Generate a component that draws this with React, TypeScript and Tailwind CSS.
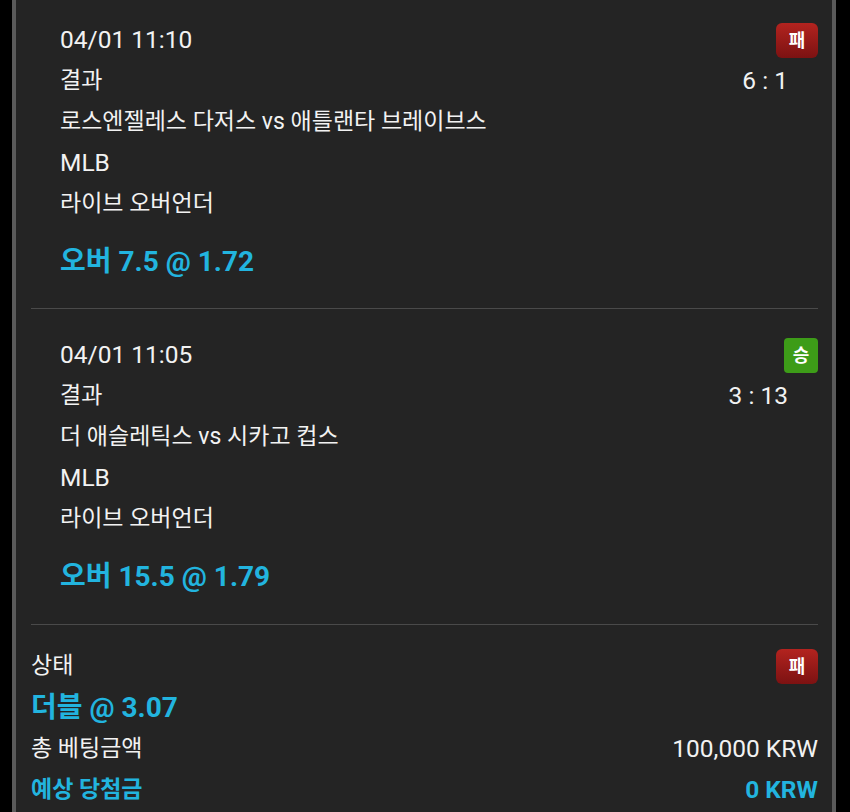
import React from "react";

type Bet = {
  time: string;
  score: string;
  match: string;
  league: string;
  market: string;
  pick: string;
  result: "win" | "lose";
};

const bets: Bet[] = [
  {
    time: "04/01 11:10",
    score: "6 : 1",
    match: "로스엔젤레스 다저스 vs 애틀랜타 브레이브스",
    league: "MLB",
    market: "라이브 오버언더",
    pick: "오버 7.5 @ 1.72",
    result: "lose",
  },
  {
    time: "04/01 11:05",
    score: "3 : 13",
    match: "더 애슬레틱스 vs 시카고 컵스",
    league: "MLB",
    market: "라이브 오버언더",
    pick: "오버 15.5 @ 1.79",
    result: "win",
  },
];

function Badge({ result }: { result: "win" | "lose" }) {
  if (result === "win") {
    return (
      <span className="flex h-[35px] w-[34px] items-center justify-center rounded-[4px] bg-[#3d9c18] text-[18px] font-bold text-white">
        승
      </span>
    );
  }
  return (
    <span className="flex h-[35px] w-[42px] items-center justify-center rounded-[6px] bg-gradient-to-b from-[#b3231f] to-[#7c1212] text-[18px] font-bold text-white">
      패
    </span>
  );
}

export default function App() {
  return (
    <div
      className="h-[812px] w-[850px] overflow-hidden bg-black pl-[12px] pr-[14px]"
      style={{ fontFamily: "Roboto, 'Noto Sans CJK KR', sans-serif" }}
    >
      <div className="-mt-[4px] h-[820px] border-l-[4px] border-r-[4px] border-l-[#5a5a5a] border-r-[#5a5a5a] bg-[#242424] pl-[15px] pr-[14px] text-[23px] text-[#f2f2f2]">
        {bets.map((bet, i) => (
          <div key={bet.time}>
            <div className={`pl-[29px] ${i === 0 ? "pt-[23.5px] pb-[29px]" : "pt-[26.5px] pb-[30px]"}`}>
              <div className="flex h-[41px] items-center justify-between">
                <span className="text-[24.5px]">{bet.time}</span>
                <Badge result={bet.result} />
              </div>
              <div className="flex h-[41px] items-center justify-between">
                <span>결과</span>
                <span className="mr-[30px] text-[24.5px]">{bet.score}</span>
              </div>
              <div className="flex h-[41px] items-center">{bet.match}</div>
              <div className="flex h-[41px] items-center text-[24.5px]">{bet.league}</div>
              <div className="flex h-[41px] items-center">{bet.market}</div>
              <div className="mt-[20px] flex h-[34px] items-center text-[28px] font-bold text-[#22b4df]">
                {bet.pick}
              </div>
            </div>
            <div className="h-px bg-[#4a4a4a]" />
          </div>
        ))}

        {/* Summary */}
        <div className="pt-[21px]">
          <div className="flex h-[41px] items-center justify-between">
            <span>상태</span>
            <Badge result="lose" />
          </div>
          <div className="flex h-[42px] items-center text-[28px] font-bold text-[#22b4df]">
            더블 @ 3.07
          </div>
          <div className="flex h-[41px] items-center justify-between">
            <span>총 베팅금액</span>
            <span className="text-[24.5px]">100,000 KRW</span>
          </div>
          <div className="flex h-[41px] items-center justify-between font-bold text-[#22b4df]">
            <span>예상 당첨금</span>
            <span className="text-[24.5px]">0 KRW</span>
          </div>
        </div>
      </div>
    </div>
  );
}
